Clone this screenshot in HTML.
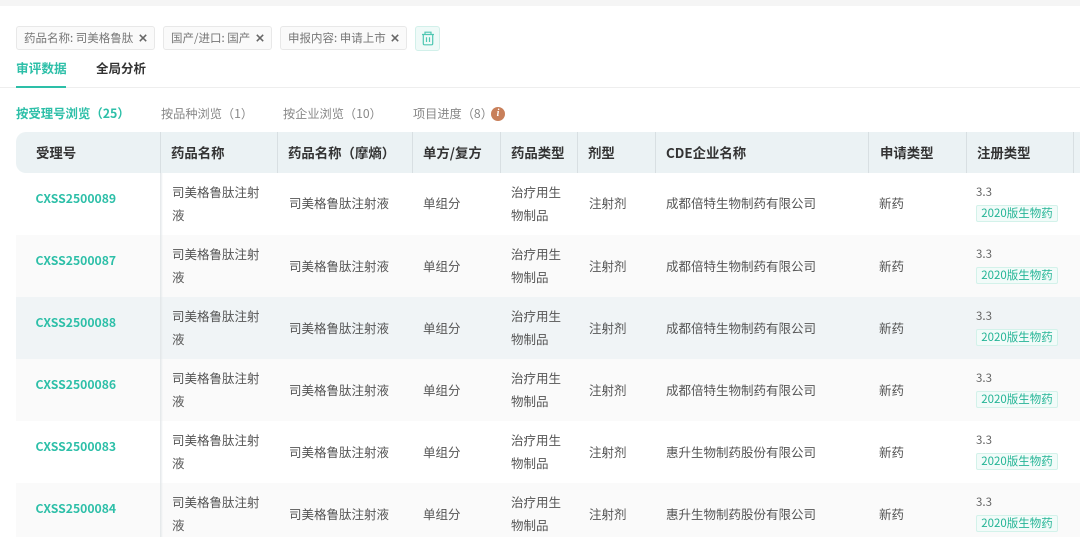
<!DOCTYPE html>
<html lang="zh-CN">
<head>
<meta charset="utf-8">
<style>
html,body{margin:0;padding:0;background:#fff;}
body{width:1080px;height:537px;overflow:hidden;position:relative;font-family:"Noto Sans CJK SC","Liberation Sans",sans-serif;color:#555;font-size:12.5px;}
#w{position:absolute;left:0;top:0;width:1080px;height:537px;overflow:hidden;filter:blur(.3px);}
#w span,#w div{position:absolute;white-space:nowrap;}
.band{left:0;top:0;width:1080px;height:6px;background:#f5f5f5;}
.tag{top:26px;height:22px;line-height:22px;border:1px solid #e8e8e8;border-radius:3px;background:#fafafa;color:#777;font-size:11.5px;padding-left:7px;box-sizing:content-box;}
.tag svg{position:absolute;right:7px;top:7px;}
.trash{left:415px;top:26px;width:23px;height:23px;border:1px solid #d2f0ea;border-radius:3px;background:#effaf8;}
.t1{top:59px;line-height:18px;font-size:12.7px;font-weight:700;color:#333;}
.t2{top:104px;line-height:18px;font-size:12.2px;color:#888;}
.hd{left:16px;top:132px;width:1064px;height:41px;background:#ebf2f4;border-radius:10px 0 0 10px;}
.sep{top:132px;width:1px;height:41px;background:#d8dfe2;}
.h{top:132px;line-height:41px;font-size:13.4px;font-weight:700;color:#333;}
.r{left:16px;width:1064px;height:62px;}
.r span{line-height:18px;}
.id{left:19.5px;top:16px;font-size:12.2px;font-weight:700;color:#2dbfa8;}
.n1{left:156px;top:10px;}
.n2{left:156px;top:33px;}
.n3{left:273px;top:22px;}
.n4{left:407px;top:22px;}
.n5{left:495px;top:10px;}
.n6{left:495px;top:33px;}
.n7{left:573px;top:22px;}
.n8{left:650px;top:22px;}
.n9{left:863px;top:22px;}
.f .n3,.f .n4,.f .n7,.f .n8,.f .n9{top:21px;}
.n10{left:960px;top:10px;font-size:11.5px;color:#666;}
.bd{left:960px;top:32px;width:80px;height:15px;line-height:15px !important;border:1px solid #d3f2ea;border-radius:2px;background:#f2fbf9;color:#25b596;font-size:11.5px;text-align:center;}
.shadow{left:160px;top:173px;width:3px;height:364px;background:linear-gradient(to right,#e2e6e8,rgba(240,240,240,0));}
</style>
</head>
<body>
<div id="w">
<div class="band"></div>

<div class="tag" style="left:16px;width:130px;">药品名称: 司美格鲁肽<svg width="8" height="8" viewBox="0 0 8 8" stroke="#666" stroke-width="1.5"><path d="M.8.8L7.2 7.2M7.2.8L.8 7.2"/></svg></div>
<div class="tag" style="left:163px;width:100px;">国产/进口: 国产<svg width="8" height="8" viewBox="0 0 8 8" stroke="#666" stroke-width="1.5"><path d="M.8.8L7.2 7.2M7.2.8L.8 7.2"/></svg></div>
<div class="tag" style="left:280px;width:118px;">申报内容: 申请上市<svg width="8" height="8" viewBox="0 0 8 8" stroke="#666" stroke-width="1.5"><path d="M.8.8L7.2 7.2M7.2.8L.8 7.2"/></svg></div>
<div class="trash">
<svg style="position:absolute;left:5px;top:4px" width="14" height="15" viewBox="0 0 14 15" fill="none" stroke="#4fc7b2" stroke-width="1.2"><path d="M1 3.5H13M4 3.5V1.2H10V3.5M2.3 3.5V12.6Q2.3 13.8 3.5 13.8H10.5Q11.7 13.8 11.7 12.6V3.5M5.5 6.2V11M8.5 6.2V11"/></svg>
</div>

<span class="t1" style="left:16px;color:#2dbfa8;">审评数据</span>
<span class="t1" style="left:96px;font-size:12.5px;">全局分析</span>
<div style="left:0;top:87px;width:1080px;height:1px;background:#eeeeee;"></div>
<div style="left:16px;top:86px;width:50px;height:2px;background:#2dbfa8;"></div>

<span class="t2" style="left:16px;color:#2dbfa8;font-weight:700;font-size:12.4px;">按受理号浏览（25）</span>
<span class="t2" style="left:161px;">按品种浏览（1）</span>
<span class="t2" style="left:283px;">按企业浏览（10）</span>
<span class="t2" style="left:413px;">项目进度（8）</span>
<div style="left:491px;top:107px;width:14px;height:14px;border-radius:50%;background:#c87f5a;color:#fff;font:italic 700 10px/14px 'Liberation Serif',serif;text-align:center;">i</div>

<div class="hd"></div>
<span class="h" style="left:36px;">受理号</span>
<span class="h" style="left:171px;">药品名称</span>
<span class="h" style="left:288px;">药品名称（摩熵）</span>
<span class="h" style="left:423px;">单方/复方</span>
<span class="h" style="left:511px;">药品类型</span>
<span class="h" style="left:588px;">剂型</span>
<span class="h" style="left:666px;">CDE企业名称</span>
<span class="h" style="left:880px;">申请类型</span>
<span class="h" style="left:977px;">注册类型</span>
<div class="sep" style="left:160px;"></div>
<div class="sep" style="left:277px;"></div>
<div class="sep" style="left:412px;"></div>
<div class="sep" style="left:500px;"></div>
<div class="sep" style="left:577px;"></div>
<div class="sep" style="left:655px;"></div>
<div class="sep" style="left:868px;"></div>
<div class="sep" style="left:966px;"></div>
<div class="sep" style="left:1073px;"></div>

<div class="r f" style="top:173px;background:#fff;">
<span class="id">CXSS2500089</span><span class="n1">司美格鲁肽注射</span><span class="n2">液</span><span class="n3">司美格鲁肽注射液</span><span class="n4">单组分</span><span class="n5">治疗用生</span><span class="n6">物制品</span><span class="n7">注射剂</span><span class="n8">成都倍特生物制药有限公司</span><span class="n9">新药</span><span class="n10">3.3</span><span class="bd">2020版生物药</span>
</div>
<div class="r" style="top:235px;background:#fafafa;">
<span class="id">CXSS2500087</span><span class="n1">司美格鲁肽注射</span><span class="n2">液</span><span class="n3">司美格鲁肽注射液</span><span class="n4">单组分</span><span class="n5">治疗用生</span><span class="n6">物制品</span><span class="n7">注射剂</span><span class="n8">成都倍特生物制药有限公司</span><span class="n9">新药</span><span class="n10">3.3</span><span class="bd">2020版生物药</span>
</div>
<div class="r" style="top:297px;height:63px;background:#f0f4f6;">
<span class="id">CXSS2500088</span><span class="n1">司美格鲁肽注射</span><span class="n2">液</span><span class="n3">司美格鲁肽注射液</span><span class="n4">单组分</span><span class="n5">治疗用生</span><span class="n6">物制品</span><span class="n7">注射剂</span><span class="n8">成都倍特生物制药有限公司</span><span class="n9">新药</span><span class="n10">3.3</span><span class="bd">2020版生物药</span>
</div>
<div class="r" style="top:359px;height:63px;background:#fafafa;">
<span class="id">CXSS2500086</span><span class="n1">司美格鲁肽注射</span><span class="n2">液</span><span class="n3">司美格鲁肽注射液</span><span class="n4">单组分</span><span class="n5">治疗用生</span><span class="n6">物制品</span><span class="n7">注射剂</span><span class="n8">成都倍特生物制药有限公司</span><span class="n9">新药</span><span class="n10">3.3</span><span class="bd">2020版生物药</span>
</div>
<div class="r" style="top:421px;height:63px;background:#fff;">
<span class="id">CXSS2500083</span><span class="n1">司美格鲁肽注射</span><span class="n2">液</span><span class="n3">司美格鲁肽注射液</span><span class="n4">单组分</span><span class="n5">治疗用生</span><span class="n6">物制品</span><span class="n7">注射剂</span><span class="n8">惠升生物制药股份有限公司</span><span class="n9">新药</span><span class="n10">3.3</span><span class="bd">2020版生物药</span>
</div>
<div class="r" style="top:483px;height:54px;background:#fafafa;">
<span class="id">CXSS2500084</span><span class="n1">司美格鲁肽注射</span><span class="n2">液</span><span class="n3">司美格鲁肽注射液</span><span class="n4">单组分</span><span class="n5">治疗用生</span><span class="n6">物制品</span><span class="n7">注射剂</span><span class="n8">惠升生物制药股份有限公司</span><span class="n9">新药</span><span class="n10">3.3</span><span class="bd">2020版生物药</span>
</div>
<div class="shadow"></div>
</div>
</body>
</html>
